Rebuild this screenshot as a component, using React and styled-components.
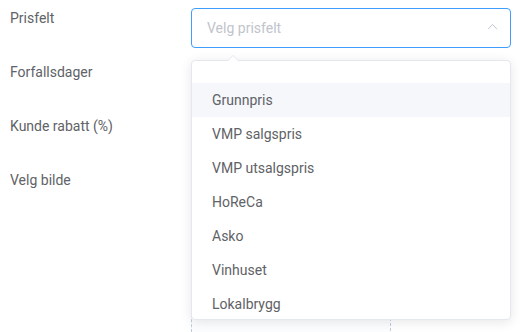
import styled, { createGlobalStyle } from "styled-components"

const GlobalStyle = createGlobalStyle`
    body {
        margin: 0;
        background: #ffffff;
        font-family: Roboto, "Liberation Sans", sans-serif;
    }
`

const options = ["Grunnpris", "VMP salgspris", "VMP utsalgspris", "HoReCa", "Asko", "Vinhuset", "Lokalbrygg"]

export default function App() {
    return (
        <>
            <GlobalStyle />
            <Form>
                <FormItem>
                    <Label>Prisfelt</Label>
                    <SelectWrap>
                        <Input focused readOnly placeholder="Velg prisfelt" />
                        <Chevron viewBox="0 0 12 8">
                            <path d="M1 7 L6 1.6 L11 7" />
                        </Chevron>
                        <Dropdown>
                            <Arrow />
                            <OptionList>
                                {options.map((o, i) => (
                                    <Option key={o} hover={i === 0}>{o}</Option>
                                ))}
                            </OptionList>
                        </Dropdown>
                    </SelectWrap>
                </FormItem>

                <FormItem>
                    <Label>Forfallsdager</Label>
                    <Input />
                </FormItem>

                <FormItem>
                    <Label>Kunde rabatt (%)</Label>
                    <Input />
                </FormItem>

                <FormItem>
                    <Label>Velg bilde</Label>
                    <UploadBox />
                </FormItem>
            </Form>
        </>
    )
}

const Form = styled.div`
    display: flex;
    flex-direction: column;
    gap: 14px;
    padding: 8px 9px 0 10px;
`
const FormItem = styled.div`
    display: flex;
    align-items: flex-start;
`
const Label = styled.div`
    width: 181px;
    flex-shrink: 0;
    font-size: 14px;
    line-height: 20px;
    color: #606266;
`
const SelectWrap = styled.div`
    position: relative;
    flex: 1;
    display: flex;
`
const Input = styled.input`
    flex: 1;
    box-sizing: border-box;
    height: 40px;
    padding: 0 30px 0 15px;
    border: 1px solid ${(props) => (props.focused ? "#409eff" : "#dcdfe6")};
    border-radius: 4px;
    font-family: Roboto, "Liberation Sans", sans-serif;
    font-size: 14px;
    color: #606266;
    outline: none;
    background: #fff;
    &::placeholder {
        color: #c0c4cc;
    }
`
const Chevron = styled.svg`
    position: absolute;
    right: 13px;
    top: 15px;
    width: 11px;
    height: 7px;
    fill: none;
    stroke: #c0c4cc;
    stroke-width: 1.1;
`
const Dropdown = styled.div`
    position: absolute;
    top: 52px;
    left: 0;
    right: 0;
    height: 260px;
    box-sizing: border-box;
    border: 1px solid #e4e7ed;
    border-radius: 4px;
    background: #fff;
    box-shadow: 0 2px 12px 0 rgba(0, 0, 0, 0.1);
    z-index: 10;
`
const Arrow = styled.div`
    position: absolute;
    top: -6px;
    left: 35px;
    width: 0;
    height: 0;
    border-left: 6px solid transparent;
    border-right: 6px solid transparent;
    border-bottom: 6px solid #e4e7ed;
    &::after {
        content: "";
        position: absolute;
        left: -6px;
        top: 1px;
        border-left: 6px solid transparent;
        border-right: 6px solid transparent;
        border-bottom: 6px solid #fff;
    }
`
const OptionList = styled.ul`
    list-style: none;
    margin: 0;
    padding: 22px 0 0;
    height: 100%;
    overflow: hidden;
    border-radius: 4px;
`
const Option = styled.li`
    height: 34px;
    line-height: 34px;
    padding: 0 20px;
    font-size: 14px;
    color: #606266;
    background: ${(props) => (props.hover ? "#f5f7fa" : "transparent")};
`
const UploadBox = styled.div`
    width: 200px;
    height: 180px;
    box-sizing: border-box;
    border: 1px dashed #c0ccda;
    border-radius: 6px;
    background: #fbfdff;
`
